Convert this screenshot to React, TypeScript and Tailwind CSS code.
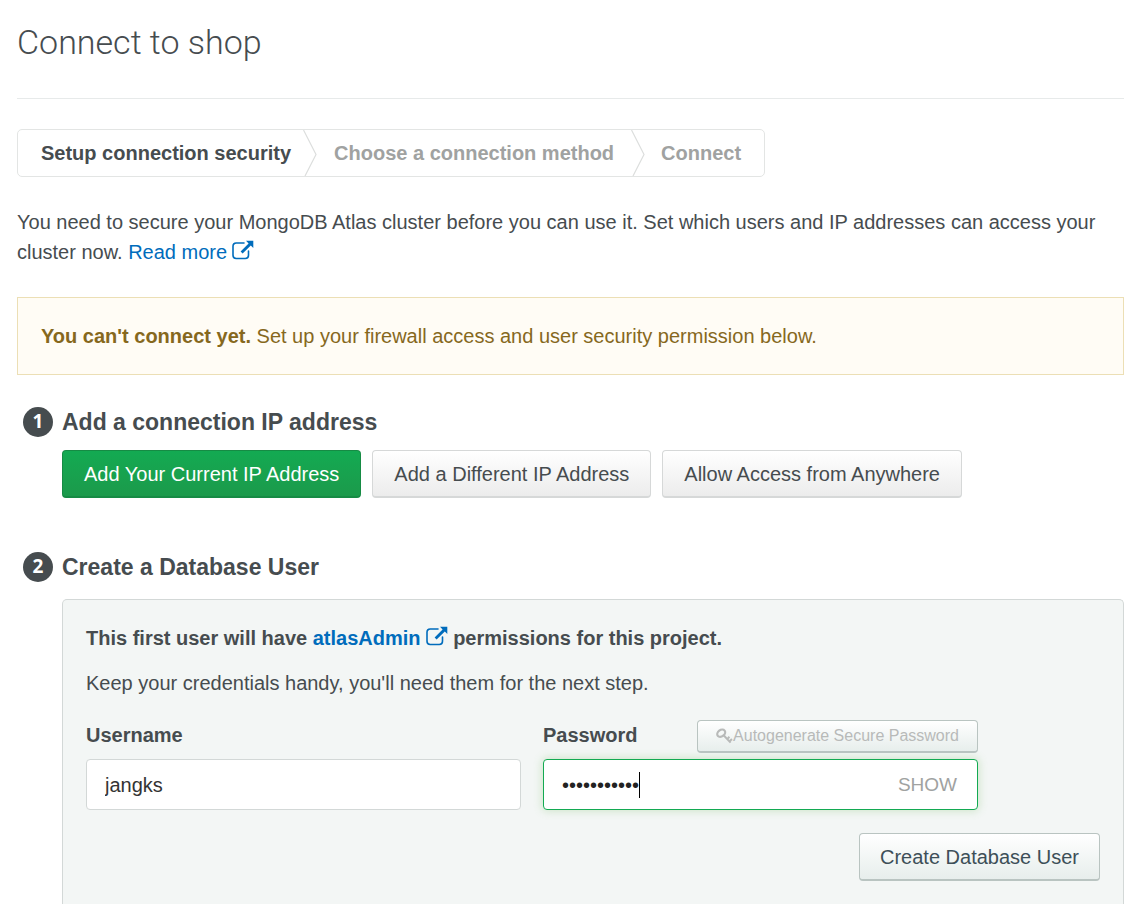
import { useState } from "react";
import type { ReactNode } from "react";

function ExternalIcon() {
  return (
    <svg
      viewBox="0 0 22 20"
      aria-hidden="true"
      className="ml-[5px] inline-block h-5 w-[22px] align-[-1px]"
    >
      <path
        d="M12 3H4.2A3.2 3.2 0 0 0 1 6.2V15.3A3.2 3.2 0 0 0 4.2 18.5H13.3A3.2 3.2 0 0 0 16.5 15.3V11"
        fill="none"
        stroke="currentColor"
        strokeWidth="1.6"
        strokeLinecap="round"
      />
      <path d="M14 .8H21.3V8L18.8 5.6L10.6 13.6L8.6 11.6L16.6 3.4Z" fill="currentColor" />
    </svg>
  );
}

function KeyIcon() {
  return (
    <svg viewBox="0 0 17 16" aria-hidden="true" className="h-4 w-[17px] shrink-0">
      <ellipse
        cx="5.2"
        cy="5.2"
        rx="4.3"
        ry="3.2"
        transform="rotate(-38 5.2 5.2)"
        fill="none"
        stroke="currentColor"
        strokeWidth="2.2"
      />
      <path
        d="M7.6 7.2L14.6 14.6M10.8 11.6L13.4 8.8M13 14L15.900 11"
        fill="none"
        stroke="currentColor"
        strokeWidth="2"
      />
    </svg>
  );
}

function Chevron() {
  return (
    <svg viewBox="0 0 14 46" aria-hidden="true" className="h-[46px] w-3.5 shrink-0 text-[#dcdedd]">
      <path d="M.5 0L13 24.5L2 46" fill="none" stroke="currentColor" strokeWidth="1.2" />
    </svg>
  );
}

function StepHeading({ number, children }: { number: number; children: ReactNode }) {
  return (
    <h2 className="flex items-center gap-[9px] pl-1.5 text-[23px] leading-[30px] font-bold">
      <span className="flex size-[30px] items-center justify-center rounded-full bg-[#464c4f] pb-0.5 font-['Noto_Sans',sans-serif] text-[19px] text-white">
        {number}
      </span>
      {children}
    </h2>
  );
}

const lightButton =
  "h-12 rounded-[4px] border border-b-2 border-[#d6d8d8] bg-linear-to-b from-white to-[#ececec] px-[21px] text-[20px] whitespace-nowrap";

const BULLET_WIDTH = 7;

export default function App() {
  const [username, setUsername] = useState("jangks");
  const [password, setPassword] = useState("mongoatlas1");
  const [visible, setVisible] = useState(false);

  return (
    <main className="flex min-h-screen flex-col bg-white pl-[17px] font-['Liberation_Sans',Arial,sans-serif] text-[20px] leading-[30px] text-[#464c4f]">
      <header className="border-b border-[#e7eaea] pt-5 pb-[34px]">
        <h1 className="font-[Roboto,sans-serif] text-[34px] leading-11 font-light">Connect to shop</h1>
      </header>

      <nav aria-label="Connection steps" className="mt-[30px]">
        <ol className="flex w-fit items-center rounded-[5px] border border-[#e3e5e4] font-bold whitespace-nowrap text-[#a0a2a1]">
          <li aria-current="step" className="pr-3 pl-[23px] text-[#464c4f]">
            Setup connection security
          </li>
          <Chevron />
          <li className="px-[17px]">Choose a connection method</li>
          <Chevron />
          <li className="pr-[23px] pl-4">Connect</li>
        </ol>
      </nav>

      <p className="mt-[30px]">
        You need to secure your MongoDB Atlas cluster before you can use it. Set which users and IP addresses can
        access your cluster now.{" "}
        <a href="#security" className="whitespace-nowrap text-[#006cbc]">
          Read more
          <ExternalIcon />
        </a>
      </p>

      <div role="alert" className="mt-[30px] border border-[#ecdfb5] bg-[#fffcf5] p-[23px] text-[#86681d]">
        <strong>You can't connect yet.</strong> Set up your firewall access and user security permission below.
      </div>

      <section className="mt-8">
        <StepHeading number={1}>Add a connection IP address</StepHeading>
        <div className="mt-[13px] flex gap-[11px] pl-[45px]">
          <button
            type="button"
            className="h-12 rounded-[4px] border border-b-2 border-[#168b44] bg-linear-to-b from-[#13aa52] to-[#1b9a4b] px-[21px] text-[20px] whitespace-nowrap text-white"
          >
            Add Your Current IP Address
          </button>
          <button type="button" className={lightButton}>
            Add a Different IP Address
          </button>
          <button type="button" className={lightButton}>
            Allow Access from Anywhere
          </button>
        </div>
      </section>

      <section className="mt-[54px] flex grow flex-col">
        <StepHeading number={2}>Create a Database User</StepHeading>
        <form
          onSubmit={(event) => event.preventDefault()}
          className="mt-[17px] ml-[45px] grow rounded-t-[5px] border border-b-0 border-[#d3d8d7] bg-[#f3f6f5] p-[23px]"
        >
          <p className="font-bold">
            This first user will have{" "}
            <a href="#atlas-admin" className="text-[#006cbc]">
              atlasAdmin
              <ExternalIcon />
            </a>{" "}
            permissions for this project.
          </p>
          <p className="mt-[15px]">Keep your credentials handy, you'll need them for the next step.</p>

          <div className="mt-[22px] flex gap-[22px]">
            <div className="w-[435px]">
              <div className="flex h-[33px] items-start">
                <label htmlFor="username" className="font-bold">
                  Username
                </label>
              </div>
              <input
                id="username"
                type="text"
                value={username}
                onChange={(event) => setUsername(event.target.value)}
                className="mt-1.5 h-[51px] w-full rounded-[4px] border border-[#d3d8d7] bg-white px-[18px] pt-0.5 text-[#333] outline-none"
              />
            </div>

            <div className="w-[435px]">
              <div className="flex h-[33px] items-start justify-between">
                <label htmlFor="password" className="font-bold">
                  Password
                </label>
                <button
                  type="button"
                  disabled
                  className="flex h-[33px] items-center rounded-[4px] border border-b-2 border-[#b9c4c1] bg-linear-to-b from-white to-[#e7eeec] px-[18px] text-[16px] whitespace-nowrap text-[#b8bab9]"
                >
                  <KeyIcon />
                  Autogenerate Secure Password
                </button>
              </div>
              <div className="mt-1.5 flex h-[51px] items-center rounded-[4px] border border-[#13aa52] bg-white pr-5 pl-[18px] shadow-[0_0_8px_1px_rgba(120,190,100,0.3)]">
                <div className="relative min-w-0 grow">
                  <input
                    id="password"
                    type={visible ? "text" : "password"}
                    autoFocus
                    value={password}
                    onChange={(event) => setPassword(event.target.value)}
                    className={
                      visible
                        ? "w-full bg-transparent text-[#222] outline-none"
                        : "w-full bg-transparent text-[#222] caret-transparent outline-none"
                    }
                  />
                  {!visible && (
                    <span
                      aria-hidden="true"
                      className="absolute inset-y-0.5 w-px bg-black"
                      style={{ left: password.length * BULLET_WIDTH }}
                    />
                  )}
                </div>
                <button type="button" onClick={() => setVisible(!visible)} className="text-[19px] text-[#a0a2a1]">
                  SHOW
                </button>
              </div>
            </div>
          </div>

          <div className="mt-[23px] flex justify-end">
            <button
              type="submit"
              className="h-12 rounded-[4px] border border-b-2 border-[#b9c4c1] bg-linear-to-b from-white to-[#e7eeec] px-5 text-[20px] whitespace-nowrap text-[#3d4f58]"
            >
              Create Database User
            </button>
          </div>
        </form>
      </section>
    </main>
  );
}
